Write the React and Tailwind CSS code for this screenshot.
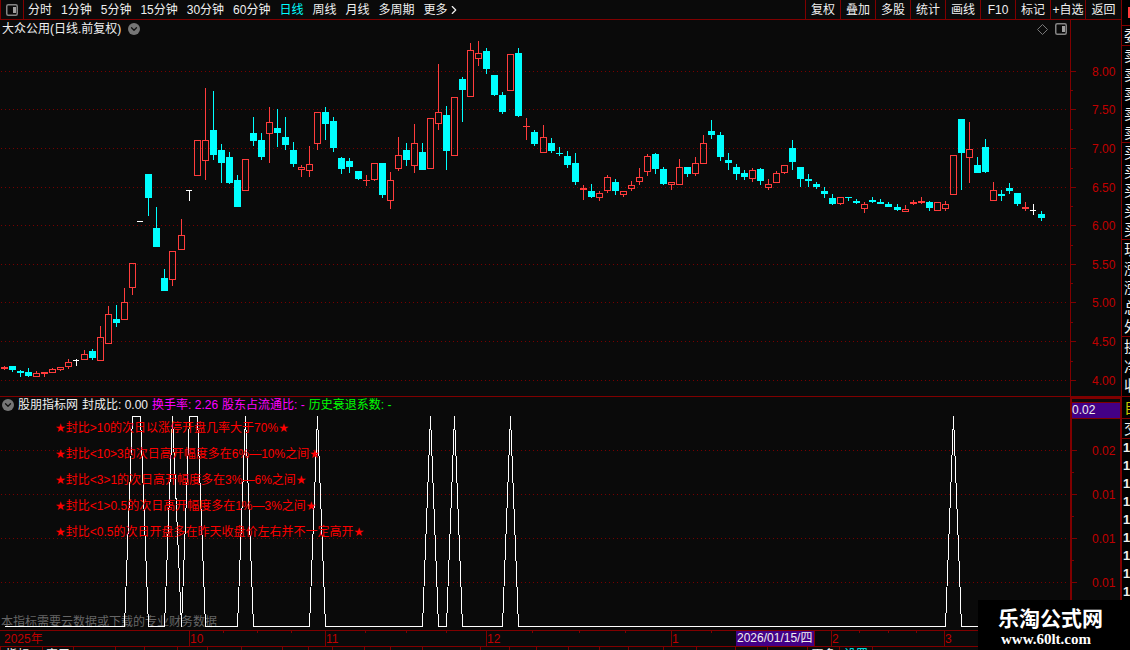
import { ChevronDown, ChevronRight } from "lucide-react";

const periods = ["分时", "1分钟", "5分钟", "15分钟", "30分钟", "60分钟", "日线", "周线", "月线", "多周期", "更多"];
const tools = ["复权", "叠加", "多股", "统计", "画线", "F10", "标记", "+自选", "返回"];

// x, high, body top, body bottom, low, kind (r = up, c = down, w = flat)
const candles = [
  [4, 366, 367, 369, 370, "r"],
  [12, 366, 366, 370, 372, "c"],
  [20, 370, 371, 373, 377, "c"],
  [28, 368, 372, 376, 377, "c"],
  [36, 371, 373, 377, 377, "r"],
  [44, 372, 372, 374, 377, "r"],
  [52, 368, 369, 373, 373, "r"],
  [60, 367, 367, 370, 371, "r"],
  [68, 359, 362, 367, 369, "r"],
  [76, 359, 360, 361, 366, "w"],
  [84, 350, 354, 360, 360, "r"],
  [92, 349, 351, 358, 360, "c"],
  [100, 326, 337, 361, 361, "r"],
  [108, 306, 314, 344, 344, "r"],
  [116, 305, 319, 323, 327, "c"],
  [124, 288, 302, 320, 320, "r"],
  [132, 263, 263, 288, 295, "r"],
  [140, 221, 221, 222, 222, "w"],
  [148, 174, 174, 198, 216, "c"],
  [156, 207, 228, 247, 247, "c"],
  [164, 269, 278, 291, 291, "c"],
  [172, 251, 251, 280, 286, "r"],
  [181, 219, 235, 250, 250, "r"],
  [189, 190, 190, 191, 201, "w"],
  [197, 140, 140, 176, 176, "r"],
  [205, 88, 140, 161, 180, "r"],
  [213, 91, 130, 155, 160, "c"],
  [221, 144, 150, 163, 183, "c"],
  [229, 152, 157, 183, 184, "c"],
  [237, 175, 180, 207, 207, "c"],
  [245, 159, 159, 191, 191, "r"],
  [253, 117, 133, 141, 146, "c"],
  [261, 133, 140, 157, 160, "c"],
  [269, 107, 122, 134, 163, "r"],
  [277, 109, 128, 133, 147, "c"],
  [285, 117, 137, 145, 150, "c"],
  [293, 142, 150, 164, 167, "c"],
  [301, 165, 167, 170, 177, "r"],
  [309, 146, 164, 171, 177, "r"],
  [317, 112, 112, 144, 150, "r"],
  [325, 107, 112, 124, 140, "c"],
  [333, 117, 121, 148, 152, "c"],
  [341, 157, 158, 169, 174, "c"],
  [349, 158, 161, 167, 173, "c"],
  [358, 171, 171, 179, 180, "c"],
  [366, 175, 180, 181, 186, "r"],
  [374, 163, 163, 180, 181, "r"],
  [382, 163, 163, 195, 198, "c"],
  [390, 172, 180, 201, 209, "r"],
  [398, 137, 155, 169, 171, "r"],
  [406, 143, 150, 160, 166, "c"],
  [414, 124, 143, 166, 173, "r"],
  [422, 143, 152, 170, 170, "c"],
  [430, 118, 118, 169, 169, "r"],
  [438, 64, 112, 124, 130, "r"],
  [446, 106, 115, 151, 170, "c"],
  [454, 97, 97, 156, 156, "r"],
  [462, 77, 79, 90, 122, "c"],
  [470, 43, 50, 97, 97, "r"],
  [478, 41, 53, 59, 66, "r"],
  [486, 48, 51, 69, 74, "c"],
  [494, 75, 75, 95, 96, "c"],
  [502, 92, 95, 112, 114, "c"],
  [510, 54, 54, 91, 91, "r"],
  [518, 48, 53, 116, 117, "c"],
  [526, 118, 126, 127, 140, "r"],
  [534, 130, 132, 144, 146, "c"],
  [543, 125, 137, 153, 153, "r"],
  [551, 138, 143, 151, 153, "c"],
  [559, 147, 153, 154, 156, "c"],
  [567, 151, 156, 165, 168, "c"],
  [575, 153, 163, 182, 185, "c"],
  [583, 185, 188, 190, 200, "r"],
  [591, 184, 191, 197, 198, "c"],
  [599, 191, 193, 198, 201, "r"],
  [607, 175, 177, 191, 193, "r"],
  [615, 179, 182, 191, 195, "c"],
  [623, 191, 191, 195, 197, "r"],
  [631, 181, 185, 189, 191, "r"],
  [639, 168, 177, 182, 185, "r"],
  [647, 154, 156, 172, 176, "r"],
  [655, 153, 154, 169, 174, "c"],
  [663, 167, 169, 184, 185, "c"],
  [671, 182, 182, 185, 190, "r"],
  [679, 159, 167, 185, 185, "r"],
  [687, 167, 167, 174, 177, "c"],
  [695, 157, 163, 174, 176, "r"],
  [703, 135, 143, 164, 164, "r"],
  [711, 120, 131, 135, 139, "c"],
  [720, 132, 135, 157, 161, "c"],
  [728, 153, 160, 163, 170, "c"],
  [736, 164, 167, 174, 180, "c"],
  [744, 170, 173, 177, 180, "c"],
  [752, 168, 170, 179, 182, "r"],
  [760, 168, 169, 181, 185, "c"],
  [768, 179, 184, 188, 190, "r"],
  [776, 171, 173, 183, 183, "r"],
  [784, 165, 165, 173, 174, "r"],
  [792, 140, 148, 162, 170, "c"],
  [800, 167, 167, 179, 187, "c"],
  [808, 174, 179, 181, 187, "c"],
  [816, 182, 184, 187, 189, "c"],
  [824, 187, 191, 194, 198, "c"],
  [832, 194, 198, 204, 205, "c"],
  [840, 197, 197, 204, 205, "r"],
  [848, 197, 197, 198, 201, "c"],
  [856, 199, 201, 203, 204, "c"],
  [864, 202, 204, 209, 213, "r"],
  [872, 197, 200, 202, 203, "c"],
  [880, 199, 202, 204, 204, "c"],
  [888, 202, 204, 207, 207, "c"],
  [897, 204, 207, 210, 211, "c"],
  [905, 205, 209, 212, 212, "r"],
  [913, 200, 202, 204, 205, "r"],
  [921, 197, 201, 203, 204, "r"],
  [929, 201, 202, 208, 211, "c"],
  [937, 202, 202, 211, 211, "r"],
  [945, 201, 204, 209, 211, "r"],
  [953, 155, 155, 195, 195, "r"],
  [961, 119, 119, 153, 190, "c"],
  [969, 122, 149, 158, 183, "r"],
  [977, 157, 165, 173, 173, "c"],
  [985, 139, 147, 172, 173, "c"],
  [993, 182, 190, 201, 201, "r"],
  [1001, 190, 194, 196, 201, "c"],
  [1009, 183, 188, 191, 194, "c"],
  [1017, 193, 193, 204, 206, "c"],
  [1025, 202, 207, 209, 211, "r"],
  [1033, 204, 210, 211, 215, "w"],
  [1041, 211, 214, 218, 221, "c"],
];

const candleColors = { r: "#ff3c3c", c: "#00ffff", w: "#ffffff" };

const priceTicks = [
  [71, "8.00"],
  [109, "7.50"],
  [148, "7.00"],
  [187, "6.50"],
  [225, "6.00"],
  [264, "5.50"],
  [302, "5.00"],
  [341, "4.50"],
  [380, "4.00"],
];
const priceMinor = [90, 129, 168, 206, 245, 283, 322, 361];

const ratioTicks = [
  [450, "0.02"],
  [494, "0.01"],
  [538, "0.01"],
  [582, "0.01"],
];
const ratioMinor = [472, 516, 560];

const ratioLine =
  "4,626 124,626 132,416 140,416 148,626 164,626 172,416 181,626 189,416 197,416 205,626 237,626 245,416 253,626 309,626 317,416 325,626 422,626 430,416 438,626 446,626 454,416 462,626 502,626 510,416 518,626 945,626 953,416 961,626 1041,626";

const notes = [
  "★封比>10的次日以涨停开盘几率大于70%★",
  "★封比<10>3的次日高开幅度多在6%—10%之间★",
  "★封比<3>1的次日高开幅度多在3%—6%之间★",
  "★封比<1>0.5的次日高开幅度多在1%—3%之间★",
  "★封比<0.5的次日开盘多在昨天收盘价左右并不一定高开★",
];

const months = [
  { label: "10", span: 135 },
  { label: "11", span: 160 },
  { label: "12", span: 184 },
  { label: "1", span: 159, cursor: "2026/01/15/四" },
  { label: "2", span: 112 },
  { label: "3", span: 176 },
];

const indicatorTabs = [
  ["指标A", 42], ["窗口", 31], ["MACD", 42], ["DMI", 29], ["DMA", 33], ["FSL", 30], ["TRIX", 34],
  ["BRAR", 41], ["CR", 26], ["VR", 24], ["OBV", 32], ["ASI", 26], ["EMV", 32], ["VOL-TDX", 58],
  ["RSI", 29], ["WR", 27], ["SAR", 32], ["KDJ", 31], ["CCI", 29], ["ROC", 35], ["MTM", 33],
  ["BOLL", 39], ["PSY", 32], ["MCST", 40], ["更多", 32], ["设置", 33],
];

const quoteGroups = [
  ["卖", "卖", "卖", "卖", "卖"],
  ["买", "买", "买", "买", "买"],
  ["现", "涨", "涨", "总", "外"],
];

function PanelIcon() {
  return (
    <svg viewBox="0 0 12 12" className="h-3 w-3 shrink-0" aria-hidden="true">
      <rect x="0.75" y="0.75" width="10.5" height="10.5" rx="1.5" fill="none" stroke="#858585" strokeWidth="1.5" />
      <rect x="7" y="3" width="3" height="6" fill="#a0a0a0" />
    </svg>
  );
}

function RoundToggle({ label }) {
  return (
    <button aria-label={label} className="flex h-3 w-3 shrink-0 items-center justify-center rounded-full bg-[#767676] text-[#111]">
      <ChevronDown size={10} strokeWidth={3} />
    </button>
  );
}

function GridLines({ ticks }) {
  return ticks.map(([y]) => (
    <line key={y} x1="1" x2="1067" y1={y + 0.5} y2={y + 0.5} stroke="#780000" strokeDasharray="1 3" />
  ));
}

function AxisTicks({ ticks, minor, x }) {
  return (
    <>
      {minor.map((y) => (
        <rect key={y} x={x} y={y} width="2" height="1" fill="#800000" />
      ))}
      {ticks.map(([y, label]) => (
        <g key={y}>
          <rect x={x} y={y} width="5" height="1" fill="#800000" />
          <text x="22" y={y + 5} fill="#c00000" fontSize="12">
            {label}
          </text>
        </g>
      ))}
    </>
  );
}

function Candle({ data }) {
  const [x, high, top, bottom, low, kind] = data;
  const color = candleColors[kind];
  const hollow = kind === "r" && bottom - top > 2;
  return (
    <g>
      {top > high && <rect x={x} y={high} width="1" height={top - high} fill={color} />}
      {low > bottom && <rect x={x} y={bottom} width="1" height={low - bottom} fill={color} />}
      {hollow ? (
        <rect x={x - 2.5} y={top + 0.5} width="6" height={bottom - top - 1} fill="none" stroke={color} />
      ) : (
        <rect x={x - 3} y={top} width={kind === "w" ? 6 : 7} height={bottom - top} fill={color} />
      )}
    </g>
  );
}

function Toolbar() {
  return (
    <nav className="flex h-5 justify-between border-b border-[#800000]">
      <div className="flex items-center">
        <button aria-label="面板" className="mr-1 flex h-full w-6 items-center justify-center border-x border-[#800000]">
          <PanelIcon />
        </button>
        <div className="flex items-center gap-[9px]">
          {periods.map((p) => (
            <button key={p} className={p === "日线" ? "text-[#00ffff]" : ""}>
              {p}
            </button>
          ))}
        </div>
        <ChevronRight size={14} strokeWidth={2} className="-ml-px" />
      </div>
      <div className="flex">
        {tools.map((t) => (
          <button key={t} className="w-[35px] border-l border-[#800000] whitespace-nowrap last:w-9">
            {t}
          </button>
        ))}
      </div>
    </nav>
  );
}

function PricePanel() {
  return (
    <section className="flex h-[376px]">
      <div className="flex min-w-0 flex-1 flex-col">
        <header className="flex h-[18px] items-center justify-between pr-[3px] pl-[2px]">
          <div className="flex items-center gap-[7px]">
            <h1 className="leading-[18px]">大众公用(日线.前复权)</h1>
            <RoundToggle label="展开主图" />
          </div>
          <div className="flex items-center gap-[7px]">
            <svg viewBox="0 0 11 11" className="h-[11px] w-[11px]" aria-hidden="true">
              <path d="M5.5 0.5 L10.5 5.5 L5.5 10.5 L0.5 5.5 Z" fill="none" stroke="#777" />
            </svg>
            <PanelIcon />
          </div>
        </header>
        <svg viewBox="0 38 1070 358" preserveAspectRatio="none" shapeRendering="crispEdges" className="min-h-0 w-full flex-1">
          <GridLines ticks={priceTicks} />
          {candles.map((c) => (
            <Candle key={c[0]} data={c} />
          ))}
        </svg>
      </div>
      <svg viewBox="1 20 50 376" className="h-full w-[51px] shrink-0 border-l border-[#800000]">
        <AxisTicks ticks={priceTicks} minor={priceMinor} x={1} />
      </svg>
    </section>
  );
}

function RatioPanel() {
  return (
    <section className="flex h-[234px] border-t border-[#800000]">
      <div className="flex min-w-0 flex-1 flex-col">
        <header className="flex h-4 items-center gap-1 pl-[2px] whitespace-nowrap">
          <RoundToggle label="展开副图" />
          <h2>股朋指标网</h2>
          <span>封成比: 0.00</span>
          <span className="text-[#ff00ff]">换手率: 2.26</span>
          <span className="text-[#ff00ff]">股东占流通比: -</span>
          <span className="text-[#00ff00]">历史衰退系数: -</span>
        </header>
        <div className="relative min-h-0 flex-1">
          <p className="absolute bottom-0 left-px leading-4 text-[#666]">本指标需要云数据或下载的专业财务数据</p>
          <svg viewBox="0 413 1070 217" preserveAspectRatio="none" shapeRendering="crispEdges" className="relative h-full w-full">
            <GridLines ticks={ratioTicks} />
            <polyline points={ratioLine} transform="translate(0.5 0.5)" fill="none" stroke="#fff" />
          </svg>
          <ul className="absolute top-[2px] left-[55px] leading-[26px] whitespace-nowrap text-[#ff0000]">
            {notes.map((n) => (
              <li key={n}>{n}</li>
            ))}
          </ul>
        </div>
      </div>
      <div className="relative w-[51px] shrink-0 border-t-2 border-r border-l-2 border-[#800000]">
        <svg viewBox="2 399 48 231" className="h-full w-full">
          <AxisTicks ticks={ratioTicks} minor={ratioMinor} x={2} />
        </svg>
        <div className="absolute inset-x-0 top-[3px] h-[17px] border-y border-[#800000] bg-[#430086] leading-[15px]">0.02</div>
      </div>
    </section>
  );
}

function TimeAxis() {
  return (
    <div className="flex h-4 border-t border-[#800000] leading-4 text-[#c00000]">
      <div className="basis-0" style={{ flexGrow: 189 }}>
        <span className="ml-1">2025年</span>
      </div>
      {months.map((m) => (
        <div key={m.label} className="relative flex min-w-0 basis-0 border-l border-[#800000]" style={{ flexGrow: m.span }}>
          <span className="w-0">{m.label}</span>
          <div className="flex h-[2px] flex-1">
            <i className="flex-1" />
            <i className="flex-1 border-l border-[#800000]" />
            <i className="flex-1 border-l border-[#800000]" />
            <i className="flex-1 border-l border-[#800000]" />
          </div>
          {m.cursor && (
            <span className="absolute top-0 left-16 h-[15px] w-[79px] border-r border-[#800000] bg-[#430086] pl-px leading-[15px] whitespace-nowrap text-[#f0f0f0]">
              {m.cursor}
            </span>
          )}
        </div>
      ))}
    </div>
  );
}

function IndicatorTabs() {
  return (
    <div className="flex h-1 overflow-hidden border-t border-[#800000]">
      {indicatorTabs.map(([label, width]) => (
        <button
          key={label}
          className={`h-4 shrink-0 border-l border-[#800000] leading-4 whitespace-nowrap ${label === "设置" ? "text-[#00ffff]" : ""}`}
          style={{ width }}
        >
          {label}
        </button>
      ))}
      <div className="w-0 border-l border-[#800000]" />
    </div>
  );
}

function QuoteColumn() {
  return (
    <aside className="w-[9px] shrink-0 overflow-hidden border-l border-[#800000] bg-black text-[15px]">
      <div className="flex h-[26px] justify-end border-b border-[#800000] pt-[7px]">
        <div className="h-[11px] w-[2px] bg-[#ff3c3c]" />
      </div>
      <div className="h-5 border-b border-[#800000] pl-[2px] leading-5">委</div>
      {quoteGroups.map((group) => (
        <div key={group[0]} className="flex h-[97px] flex-col border-b border-[#800000] pl-[2px]">
          {group.map((c, i) => (
            <span key={i} className="flex-1 leading-[19px]">
              {c}
            </span>
          ))}
        </div>
      ))}
      <div className="flex h-[60px] flex-col border-b border-[#800000] pl-[2px]">
        <span className="flex-1 leading-[19px]">换</span>
        <span className="flex-1 leading-[19px]">净</span>
        <span className="flex-1 leading-[19px]">收</span>
      </div>
      <div className="h-[22px] border-b border-[#800000] pl-[2px] leading-[22px] text-[#c8c800]">自</div>
      <div className="h-5 border-b border-[#800000] pl-[2px] leading-5">交</div>
      <div className="flex flex-col pl-px text-[13px] leading-[18px] font-bold">
        {[1, 2, 3, 4, 5, 6, 7, 8, 9].map((n) => (
          <span key={n}>1</span>
        ))}
      </div>
    </aside>
  );
}

export default function App() {
  return (
    <div className="relative flex min-h-screen overflow-hidden bg-[#0a0a0a] font-['Liberation_Sans','DejaVu_Sans','Noto_Sans_CJK_SC',sans-serif] text-[12px] leading-4 text-[#f0f0f0]">
      <main className="min-w-0 flex-1">
        <Toolbar />
        <PricePanel />
        <RatioPanel />
        <TimeAxis />
        <IndicatorTabs />
      </main>
      <QuoteColumn />
      <a
        href="#"
        className="absolute right-0 bottom-0 flex h-[50px] w-[152px] flex-col bg-black pt-2 pl-5 font-bold text-white"
      >
        <span className="text-[21px] leading-[22px]">乐淘公式网</span>
        <span className="pl-[3px] font-['Liberation_Serif',serif] text-[15px] leading-[18px]">www.60lt.com</span>
      </a>
    </div>
  );
}
